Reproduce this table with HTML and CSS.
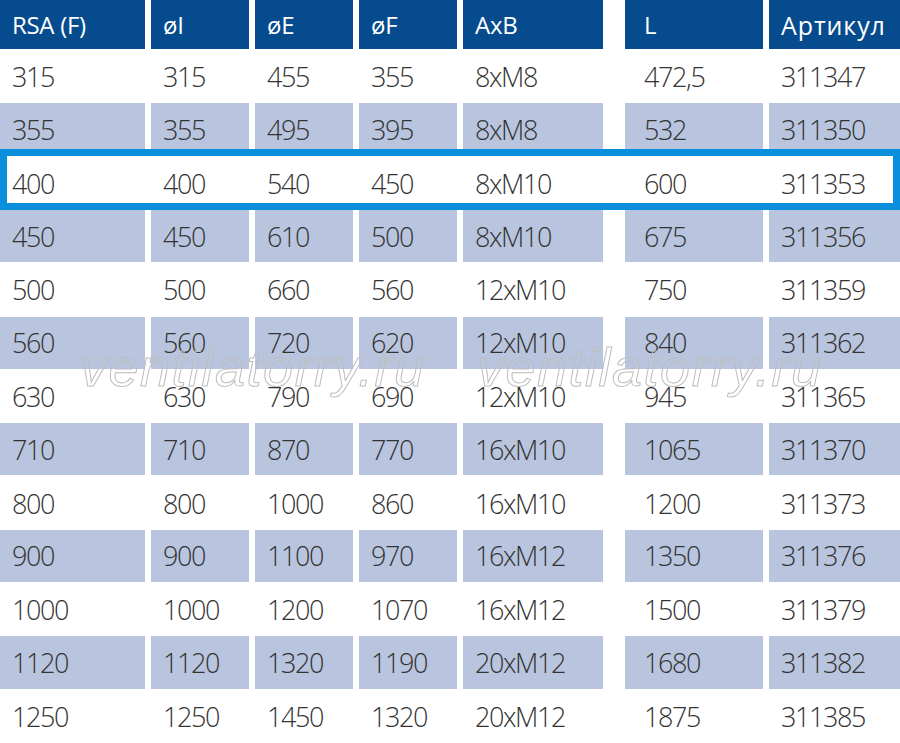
FILE: index.html
```html
<!DOCTYPE html>
<html lang="ru">
<head>
<meta charset="utf-8">
<title>RSA (F)</title>
<link rel="stylesheet" href="styles.css">
</head>
<body>
<div class="sheet">
  <div class="grid">
    <div class="row head">
      <div class="c">RSA (F)</div><div class="c">øI</div><div class="c">øE</div><div class="c">øF</div><div class="c">AxB</div><div class="c c6">L</div><div class="c c7">Артикул</div>
    </div>
    <div class="row"><div class="c">315</div><div class="c">315</div><div class="c">455</div><div class="c">355</div><div class="c">8xM8</div><div class="c c6">472,5</div><div class="c">311347</div></div>
    <div class="row alt"><div class="c">355</div><div class="c">355</div><div class="c">495</div><div class="c">395</div><div class="c">8xM8</div><div class="c c6">532</div><div class="c">311350</div></div>
    <div class="row"><div class="c">400</div><div class="c">400</div><div class="c">540</div><div class="c">450</div><div class="c">8xM10</div><div class="c c6">600</div><div class="c">311353</div></div>
    <div class="row alt"><div class="c">450</div><div class="c">450</div><div class="c">610</div><div class="c">500</div><div class="c">8xM10</div><div class="c c6">675</div><div class="c">311356</div></div>
    <div class="row"><div class="c">500</div><div class="c">500</div><div class="c">660</div><div class="c">560</div><div class="c">12xM10</div><div class="c c6">750</div><div class="c">311359</div></div>
    <div class="row alt"><div class="c">560</div><div class="c">560</div><div class="c">720</div><div class="c">620</div><div class="c">12xM10</div><div class="c c6">840</div><div class="c">311362</div></div>
    <div class="row"><div class="c">630</div><div class="c">630</div><div class="c">790</div><div class="c">690</div><div class="c">12xM10</div><div class="c c6">945</div><div class="c">311365</div></div>
    <div class="row alt"><div class="c">710</div><div class="c">710</div><div class="c">870</div><div class="c">770</div><div class="c">16xM10</div><div class="c c6">1065</div><div class="c">311370</div></div>
    <div class="row"><div class="c">800</div><div class="c">800</div><div class="c">1000</div><div class="c">860</div><div class="c">16xM10</div><div class="c c6">1200</div><div class="c">311373</div></div>
    <div class="row alt"><div class="c">900</div><div class="c">900</div><div class="c">1100</div><div class="c">970</div><div class="c">16xM12</div><div class="c c6">1350</div><div class="c">311376</div></div>
    <div class="row"><div class="c">1000</div><div class="c">1000</div><div class="c">1200</div><div class="c">1070</div><div class="c">16xM12</div><div class="c c6">1500</div><div class="c">311379</div></div>
    <div class="row alt"><div class="c">1120</div><div class="c">1120</div><div class="c">1320</div><div class="c">1190</div><div class="c">20xM12</div><div class="c c6">1680</div><div class="c">311382</div></div>
    <div class="row"><div class="c">1250</div><div class="c">1250</div><div class="c">1450</div><div class="c">1320</div><div class="c">20xM12</div><div class="c c6">1875</div><div class="c">311385</div></div>
  </div>
  <div class="highlight"></div>
  <div class="wm wm1">ventilatorry.ru</div>
  <div class="wm wm2">ventilatorry.ru</div>
</div>
</body>
</html>
```
FILE: styles.css
```css
html, body {
  margin: 0;
  padding: 0;
  background: #ffffff;
}
.sheet {
  position: relative;
  width: 900px;
  height: 743px;
  overflow: hidden;
  font-family: "Open Sans", "Noto Sans", sans-serif;
  color: #333333;
}
.grid {
  display: grid;
  grid-template-columns: 145px 98px 98px 98px 140px 154px 131px;
  grid-template-rows: 50px repeat(13, 1fr);
  column-gap: 6px;
  height: 743px;
}
.row {
  display: contents;
}
.c {
  display: flex;
  align-items: center;
  padding-left: 12px;
  font-size: 27px;
  font-weight: 300;
  letter-spacing: -1.4px;
  white-space: nowrap;
}
.c6 {
  margin-left: 16px;
  padding-left: 19px;
}
.head .c {
  background: #064b8e;
  color: #ffffff;
  font-size: 24px;
  font-weight: 400;
  letter-spacing: -0.3px;
  margin-bottom: 1px;
}
.head .c7 {
  letter-spacing: 0.9px;
  font-size: 25px;
}
.alt .c {
  background: #b9c5de;
  margin-bottom: 1px;
}
.highlight {
  position: absolute;
  left: 0;
  top: 149px;
  width: 900px;
  height: 61px;
  box-sizing: border-box;
  border: 7px solid #0a8fdc;
}
.wm {
  position: absolute;
  top: 340px;
  font-family: "Liberation Sans", Arial, sans-serif;
  font-style: italic;
  font-size: 54px;
  letter-spacing: 1.5px;
  color: transparent;
  -webkit-text-stroke: 1px #bdbdbd;
  line-height: 1;
}
.wm1 { left: 80px; }
.wm2 { left: 477px; }
```
